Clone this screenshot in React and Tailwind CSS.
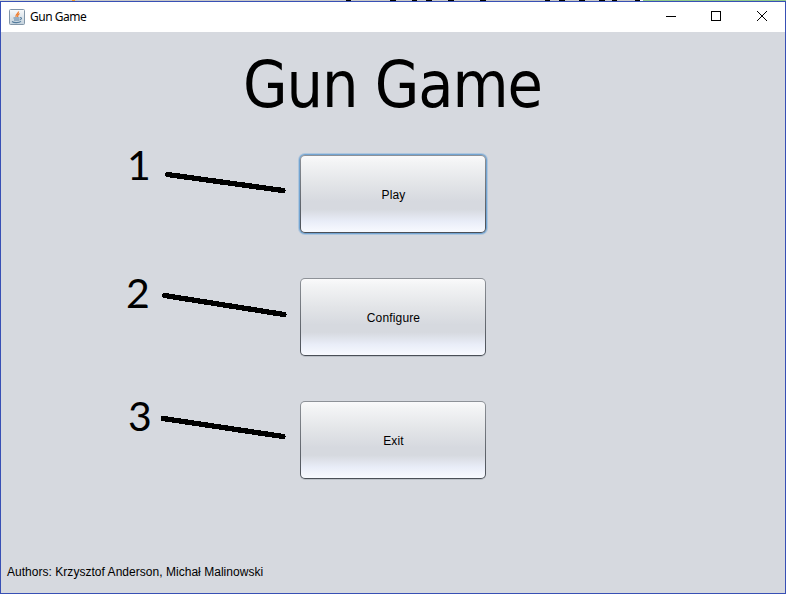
import React from "react";

const rows = [
  { n: "1", label: "Play", line: [6.5, 19.5, 122, 35.5], num: "-mt-[11px]", focus: true },
  { n: "2", label: "Configure", line: [3.5, 17.5, 123, 36.5], num: "-ml-px mr-px -mt-[6px]" },
  { n: "3", label: "Exit", line: [2, 17.5, 122, 35.5], num: "pl-[1px] -mt-[6px]" },
];

function JavaIcon() {
  return (
    <svg width="16" height="16" viewBox="0 0 16 16" fill="none">
      <defs>
        <linearGradient id="tile" x1="0" y1="0" x2="0" y2="1">
          <stop offset="0" stopColor="#f8fafb" />
          <stop offset="1" stopColor="#c3d1dc" />
        </linearGradient>
      </defs>
      <rect x="0.5" y="0.5" width="15" height="15" rx="1" fill="url(#tile)" stroke="#8296a8" />
      <path d="M9.5 2.5C10 4.5 6 5 7 8M10.5 4.5C8 6 9 6.5 8.5 8" stroke="#ef7b2c" strokeWidth="1.3" />
      <path d="M4.5 9h6M5 11h5M11 8.5c2.5 0 1.5 2-.5 2.5M3 12.5c2 1.5 7 1.5 9-.2" stroke="#557c9d" strokeWidth="1.1" />
    </svg>
  );
}

function TopEdge() {
  return (
    <svg className="block shrink-0" width="786" height="1" shapeRendering="crispEdges">
      <rect width="640" height="1" fill="#c8c8c8" />
      <rect x="643" width="143" height="1" fill="#91c98a" />
      <rect width="50" height="1" fill="#d5d9d6" />
      <rect x="72" width="3" height="1" fill="#f39a25" />
      <path d="M346 .5h5M390 .5h6M412 .5h5M426 .5h6M448 .5h6M480 .5h6M545 .5h5M559 .5h6M579 .5h6M599 .5h6M612 .5h5M635 .5h5" stroke="#000" />
    </svg>
  );
}

function MenuButton({ label, focus }) {
  return (
    <button
      className={
        "h-[78px] w-[186px] shrink-0 rounded-[5px] bg-linear-to-b from-[#8e9298] to-[#4a4f57] p-px font-['Liberation_Sans',Arial,sans-serif] text-[12px] tracking-[0.15px] text-black " +
        (focus ? "shadow-[0_0_0_1px_#73a4d1,0_0_0_2px_#afc6dd]" : "shadow-[0_1px_0_#bbc0c7]")
      }
    >
      <span className="flex h-full w-full items-center justify-center rounded-[4px] bg-[linear-gradient(to_bottom,#fafafb_0%,#f3f4f5_8%,#e3e5e8_36%,#d6d9df_60%,#d6d9df_70%,#e9edf8_86%,#f8faff_100%)] pt-[2px] pl-px">
        {label}
      </span>
    </button>
  );
}

export default function App() {
  return (
    <div className="flex h-[594px] w-[786px] flex-col overflow-hidden bg-white text-black">
      <TopEdge />
      <div className="flex flex-1 flex-col border border-[#3850b5] bg-[#d6d9df]">
        <header className="flex h-[30px] shrink-0 items-center bg-white pl-2">
          <JavaIcon />
          <span className="ml-[5px] flex-1 font-['Noto_Sans','Open_Sans',sans-serif] text-[12px] tracking-[-0.5px]">Gun Game</span>
          <svg width="120" height="30" fill="none" stroke="#000" shapeRendering="crispEdges">
            <path d="M1 14.5h10" />
            <rect x="46.5" y="9.5" width="9" height="9" />
            <path d="M92 9l10 10M102 9l-10 10" shapeRendering="auto" />
          </svg>
        </header>
        <h1 className="h-[123px] shrink-0 pt-[9px] pr-px text-center font-['DejaVu_Sans_Condensed','DejaVu_Sans',sans-serif] text-[64px] leading-[88px] font-normal tracking-[-1.05px] whitespace-nowrap [font-stretch:condensed]">
          Gun Game
        </h1>
        <main className="flex flex-col gap-[45px] pl-[126px]">
          {rows.map(({ n, label, line, num, focus }) => (
            <div key={n} className="flex h-[78px] items-start">
              <span className={"w-[34px] shrink-0 font-['Lato',sans-serif] text-[41px] leading-[42px] " + num}>{n}</span>
              <svg className="shrink-0" width="139" height="78" shapeRendering="crispEdges">
                <line x1={line[0]} y1={line[1]} x2={line[2]} y2={line[3]} stroke="#000" strokeWidth="5.3" strokeLinecap="round" />
              </svg>
              <MenuButton label={label} focus={focus} />
            </div>
          ))}
        </main>
        <footer className="mt-auto pb-[13px] pl-[6px] font-['Liberation_Sans',Arial,sans-serif] text-[12px] leading-4 tracking-[0.03px]">
          Authors: Krzysztof Anderson, Michał Malinowski
        </footer>
      </div>
    </div>
  );
}
